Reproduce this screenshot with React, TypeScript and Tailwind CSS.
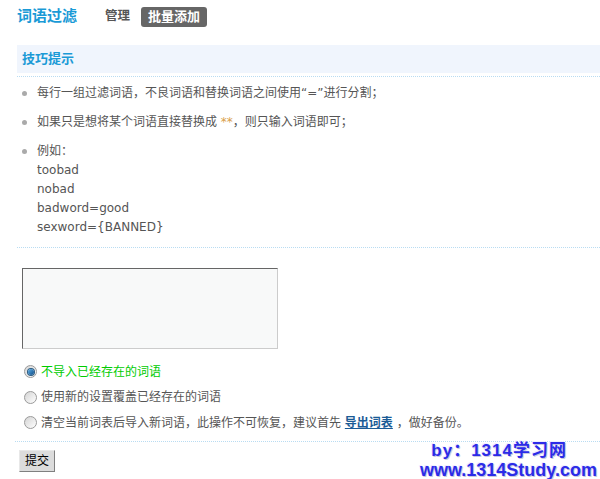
import React from "react";

const font = { fontFamily: '"DejaVu Sans", Verdana, "Noto Sans CJK SC", sans-serif' };

function Radio({ checked }: { checked?: boolean }) {
  return (
    <span className="relative inline-flex h-[13px] w-[13px] items-center justify-center rounded-full border border-[#9a9a9a] bg-gradient-to-br from-[#d4d4d4] to-[#ffffff]">
      {checked && (
        <span className="h-[6px] w-[6px] rounded-full bg-gradient-to-br from-[#5fb0e8] to-[#0b4f8a] shadow-[0_0_0_1px_#2a5a80]" />
      )}
    </span>
  );
}

export default function App() {
  return (
    <div className="relative h-[479px] w-[600px] overflow-hidden bg-white text-[12px] text-[#555]" style={font}>
      {/* header */}
      <div className="flex h-[32px] items-center pl-[17px] pt-[1px]">
        <span className="text-[15px] font-bold leading-none text-[#1a9ad6]">词语过滤</span>
        <span className="ml-[28px] text-[12.5px] font-bold text-[#555]">管理</span>
        <span className="ml-[11px] flex h-[20px] items-center rounded-[3px] bg-[#666] px-[7px] text-[13px] font-bold text-white">批量添加</span>
      </div>

      {/* tips */}
      <div className="ml-[17px] mt-[13px] border-b border-dotted border-[#b9dcf2] pb-[3px]">
        <div className="flex h-[28px] items-center bg-[#f0f5fd] pl-[5px] text-[13px] font-bold text-[#1a9ad6]">技巧提示</div>
      </div>
      <ul className="ml-[17px] flex flex-col gap-[10px] border-b border-dotted border-[#b9dcf2] pb-[10px] pt-[7px] leading-[19px]">
        <li className="flex">
          <span className="ml-[5px] mr-[10px] mt-[7px] h-[5px] w-[5px] rounded-full bg-[#aaa]" />
          <span>每行一组过滤词语，不良词语和替换词语之间使用“=”进行分割；</span>
        </li>
        <li className="flex">
          <span className="ml-[5px] mr-[10px] mt-[7px] h-[5px] w-[5px] rounded-full bg-[#aaa]" />
          <span>
            如果只是想将某个词语直接替换成 <span className="text-[#d9a04b]">**</span>，则只输入词语即可；
          </span>
        </li>
        <li className="flex">
          <span className="ml-[5px] mr-[10px] mt-[7px] h-[5px] w-[5px] rounded-full bg-[#aaa]" />
          <span className="flex flex-col">
            <span>例如：</span>
            <span>toobad</span>
            <span>nobad</span>
            <span>badword=good</span>
            <span>sexword={"{BANNED}"}</span>
          </span>
        </li>
      </ul>

      {/* textarea */}
      <div className="ml-[22px] mt-[20px] h-[81px] w-[256px] border border-b-[#ccc] border-l-[#666] border-r-[#ccc] border-t-[#666] bg-[#f8f9f9]" />

      {/* radios */}
      <div className="ml-[24px] mt-[13px] flex flex-col gap-[6.5px]">
        <label className="flex h-[19px] items-center gap-[4px]">
          <Radio checked />
          <span className="text-[#00cc00]">不导入已经存在的词语</span>
        </label>
        <label className="flex h-[19px] items-center gap-[4px]">
          <Radio />
          <span>使用新的设置覆盖已经存在的词语</span>
        </label>
        <label className="flex h-[19px] items-center gap-[4px]">
          <Radio />
          <span>
            清空当前词表后导入新词语，此操作不可恢复，建议首先 <span className="font-bold text-[#1a5b96] underline">导出词表</span> ，做好备份。
          </span>
        </label>
      </div>

      <div className="ml-[15px] mt-[9px] border-t border-dotted border-[#b9dcf2] pt-[8px] pl-[4px]">
        <button className="flex h-[22px] w-[36px] items-center justify-center border border-b-[#808080] border-l-[#e8e8e8] border-r-[#808080] border-t-[#e8e8e8] bg-[#dcdcdc] text-[12px] text-black">
          提交
        </button>
      </div>

      {/* watermark */}
      <div
        className="absolute bottom-[0px] right-[3px] flex flex-col items-end font-bold leading-none text-[#2b2be8]"
        style={{ fontFamily: '"Liberation Sans", Arial, "Noto Sans CJK SC", sans-serif', textShadow: "1px 1px 0 #c8c8e0, -1px -1px 0 #eef" }}
      >
        <span className="mr-[30px] text-[17px] tracking-[1px]">by：1314学习网</span>
        <span className="mt-[2px] text-[18px]">www.1314Study.com</span>
      </div>
    </div>
  );
}
